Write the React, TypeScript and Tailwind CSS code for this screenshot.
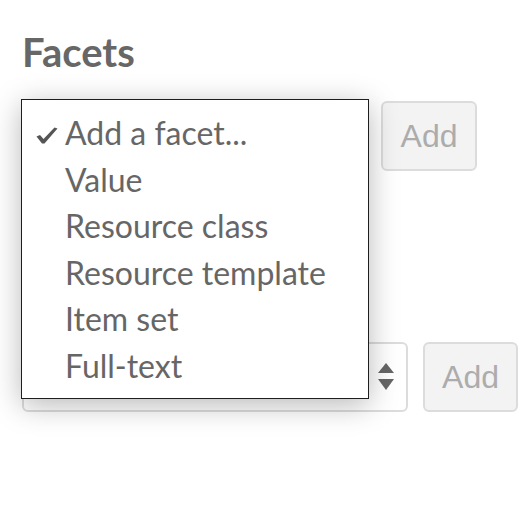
const OPTIONS = ["Add a facet...", "Value", "Resource class", "Resource template", "Item set", "Full-text"];

function AddButton({ className = "" }: { className?: string }) {
  return (
    <button
      type="button"
      disabled
      className={`flex h-[70px] shrink-0 items-center justify-center rounded-[6px] border-2 border-[#dcdcdc] bg-[#f3f3f3] font-['Liberation_Sans',Arial,sans-serif] text-[32px] text-[#acacac] ${className}`}
    >
      Add
    </button>
  );
}

export default function App() {
  return (
    <div className="relative h-[522px] w-[532px] overflow-hidden bg-white font-['Lato',sans-serif] text-[#666]">
      <div className="pt-[28px] pl-[22px]">
        <h2 className="text-[40px] leading-[48px] font-bold text-[#676767]">Facets</h2>

        <div className="mt-[25px] flex items-start gap-[12px]">
          <div className="h-[71px] w-[347px] shrink-0 rounded-[6px] border-2 border-[#dcdcdc]" />
          <AddButton className="w-[96px]" />
        </div>

        <div className="mt-[170px] flex items-start gap-[15px]">
          <div className="flex h-[70px] w-[386px] shrink-0 items-center justify-end rounded-[6px] border-2 border-[#dcdcdc] pr-[12px]">
            <svg width="16" height="28" viewBox="0 0 16 28" aria-hidden="true">
              <path d="M8 0 L16 10 L0 10 Z" fill="#666" />
              <path d="M0 16 L16 16 L8 27 Z" fill="#666" />
            </svg>
          </div>
          <AddButton className="w-[95px]" />
        </div>
      </div>

      {/* open native select popup */}
      <ul className="absolute top-[99px] left-[21px] w-[348px] border border-[#1e1e1e] bg-white pt-[10px] pb-[8px] shadow-[0_6px_28px_rgba(0,0,0,0.28)]">
        {OPTIONS.map((o, i) => (
          <li key={o} className="relative pl-[43px] text-[32px] leading-[46.6px] text-[#666]">
            {i === 0 && (
              <svg
                className="absolute top-[17px] left-[14px]"
                width="22"
                height="17"
                viewBox="0 0 22 17"
                aria-hidden="true"
              >
                <path d="M0.5 9.5 L4 8 L7.5 12 L18.5 0.5 L21.5 1.5 L8.5 16.5 L6 16.5 Z" fill="#555" />
              </svg>
            )}
            {o}
          </li>
        ))}
      </ul>
    </div>
  );
}
